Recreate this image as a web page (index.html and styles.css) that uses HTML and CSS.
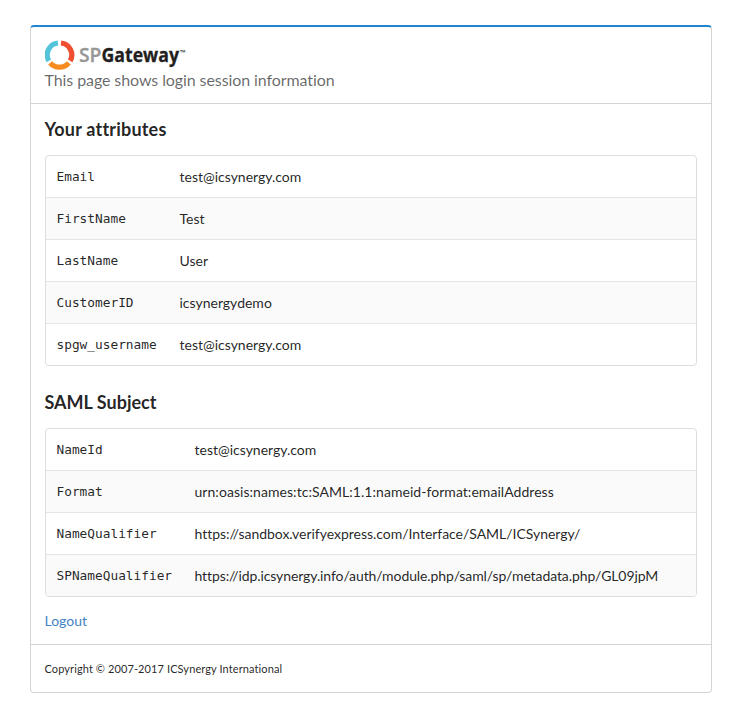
FILE: index.html
```html
<!DOCTYPE html>
<html lang="en">
<head>
<meta charset="utf-8">
<title>SPGateway</title>
<link rel="stylesheet" href="styles.css">
</head>
<body>
<main class="card">
  <header class="header">
    <svg class="logo" width="142" height="30" viewBox="0 0 142 30" role="img" aria-label="SPGateway">
      <g fill="none" stroke-width="5.2">
        <path stroke="#f04e30" d="M16 3A12 12 0 0 1 25.2 20.9"/>
        <path stroke="#f68b1f" d="M23.8 22.8A12 12 0 0 1 5.2 22.8"/>
        <path stroke="#53c4d9" d="M3.8 20.9A12 12 0 0 1 13 3"/>
      </g>
      <text y="22"><tspan class="logo-sp" x="34" textLength="22.5" lengthAdjust="spacingAndGlyphs">SP</tspan><tspan class="logo-gateway" x="56.5" textLength="77.5" lengthAdjust="spacingAndGlyphs">Gateway</tspan><tspan class="logo-tm" x="135" y="14.5" textLength="5.5" lengthAdjust="spacingAndGlyphs">™</tspan></text>
    </svg>
    <p class="subtitle">This page shows login session information</p>
  </header>
  <section class="content">
    <h2 class="wide">Your attributes</h2>
    <dl class="table attributes">
      <div class="row"><dt>Email</dt><dd>test@icsynergy.com</dd></div>
      <div class="row"><dt>FirstName</dt><dd>Test</dd></div>
      <div class="row"><dt>LastName</dt><dd>User</dd></div>
      <div class="row"><dt>CustomerID</dt><dd>icsynergydemo</dd></div>
      <div class="row"><dt>spgw_username</dt><dd>test@icsynergy.com</dd></div>
    </dl>
    <h2>SAML Subject</h2>
    <dl class="table subject">
      <div class="row"><dt>NameId</dt><dd>test@icsynergy.com</dd></div>
      <div class="row"><dt>Format</dt><dd class="urn">urn:oasis:names:tc:SAML:1.1:nameid-format:emailAddress</dd></div>
      <div class="row"><dt>NameQualifier</dt><dd class="url">https://sandbox.verifyexpress.com/Interface/SAML/ICSynergy/</dd></div>
      <div class="row"><dt>SPNameQualifier</dt><dd class="url long">https://idp.icsynergy.info/auth/module.php/saml/sp/metadata.php/GL09jpM</dd></div>
    </dl>
    <a class="logout" href="#">Logout</a>
  </section>
  <footer class="footer">Copyright © 2007-2017 ICSynergy International</footer>
</main>
</body>
</html>
```
FILE: styles.css
```css
* { box-sizing: border-box; }

body {
  margin: 0;
  padding: 25px 33px 0 30px;
  background: #fff;
  color: rgba(0, 0, 0, .87);
  font: 14px/20px Lato, "Liberation Sans", sans-serif;
  font-variant-ligatures: none;
}

.card {
  height: 668px;
  border: 1px solid #d4d4d5;
  border-top: 2px solid #2185d0;
  border-radius: 4px;
}

.header {
  height: 77px;
  padding: 13px 14px 0;
  border-bottom: 1px solid #d4d4d5;
}

.logo { display: block; }

.logo text { font-family: "Open Sans", "Noto Sans", sans-serif; font-weight: 700; }
.logo .logo-sp { font-size: 19px; font-weight: 600; fill: #979797; stroke: #979797; stroke-width: .3px; }
.logo .logo-gateway { font-size: 19px; fill: #231f20; stroke: #231f20; stroke-width: .3px; }
.logo .logo-tm { font-size: 7px; fill: #231f20; }

.subtitle {
  margin: 0 0 0 -.5px;
  color: rgba(0, 0, 0, .6);
  font-size: 16px;
  line-height: 20px;
  letter-spacing: -.09px;
}

.content {
  height: 541px;
  padding: 14px 14px 0;
  border-bottom: 1px solid #d4d4d5;
}

h2 {
  margin: 0 0 14px -.5px;
  font-size: 18px;
  line-height: 23px;
  font-weight: 700;
}

.wide { letter-spacing: .2px; }

.table {
  margin: 0 0 25px;
  border: 1px solid #dededf;
  border-radius: 4px;
  overflow: hidden;
}

.row {
  display: grid;
  height: 42px;
  align-items: center;
  padding-left: 10.5px;
  border-bottom: 1px solid #e5e5e5;
}

.row:last-child { height: 41px; border-bottom: 0; }
.row:nth-child(even) { background: #fafafa; }
.attributes .row { grid-template-columns: 123px 1fr; }
.subject .row { grid-template-columns: 138px 1fr; }

dt {
  font-family: "DejaVu Sans Mono", monospace;
  font-size: 12.8px;
}

dd { margin: 0; padding-top: 1px; }

.urn { letter-spacing: .05px; }
.url { letter-spacing: -.03px; }
.long { letter-spacing: -.095px; }

.subject { margin-bottom: 14px; }

.logout {
  display: block;
  width: max-content;
  margin-left: -.5px;
  color: #4183c4;
  text-decoration: none;
}

.footer {
  padding: 14px 13.5px;
  font-size: 11px;
  letter-spacing: .1px;
}
```
